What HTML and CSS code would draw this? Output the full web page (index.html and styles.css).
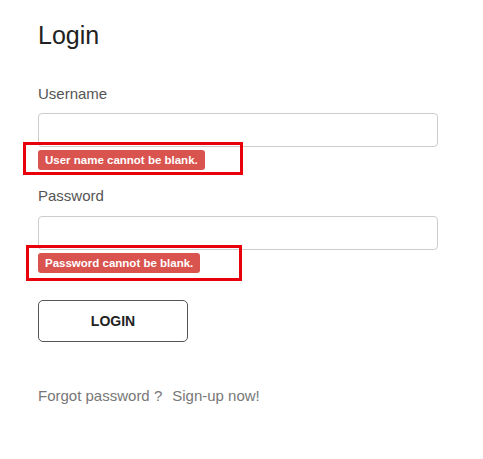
FILE: index.html
```html
<!DOCTYPE html>
<html>
<head>
<meta charset="utf-8">
<link rel="stylesheet" href="styles.css">
</head>
<body>
<div class="page">
  <h1 class="title">Login</h1>
  <div class="field field-user">
    <label class="label">Username</label>
    <input class="input" type="text">
    <span class="badge">User name cannot be blank.</span>
  </div>
  <div class="field field-pass">
    <label class="label">Password</label>
    <input class="input" type="password">
    <span class="badge">Password cannot be blank.</span>
  </div>
  <button class="btn">LOGIN</button>
  <div class="links">
    <a class="link">Forgot password ?</a>
    <a class="link">Sign-up now!</a>
  </div>
  <div class="mark mark-1"></div>
  <div class="mark mark-2"></div>
</div>
</body>
</html>
```
FILE: styles.css
```css
html, body {
  margin: 0;
  padding: 0;
  background: #fff;
}
.page {
  position: relative;
  width: 483px;
  height: 459px;
  padding: 21px 0 0 38px;
  box-sizing: border-box;
  font-family: "Liberation Sans", Arial, sans-serif;
}
.title {
  margin: 0;
  font-size: 25px;
  font-weight: normal;
  line-height: 29px;
  color: #222;
}
.field {
  display: flex;
  flex-direction: column;
  align-items: flex-start;
  width: 400px;
}
.field-user {
  margin-top: 34px;
}
.field-pass {
  margin-top: 16px;
}
.label {
  font-size: 15px;
  line-height: 20px;
  color: #555;
}
.field-user .input {
  margin-top: 9px;
}
.field-pass .input {
  margin-top: 10px;
}
.input {
  width: 400px;
  height: 34px;
  box-sizing: border-box;
  border: 1px solid #ccc;
  border-radius: 4px;
  padding: 6px 12px;
  font-size: 14px;
  outline: none;
}
.badge {
  margin-top: 3px;
  height: 20px;
  line-height: 20px;
  padding: 0 7px;
  background: #d9534f;
  color: #fff;
  font-weight: bold;
  font-size: 11.5px;
  border-radius: 3px;
  box-sizing: border-box;
}
.btn {
  display: block;
  margin-top: 27px;
  width: 150px;
  height: 42px;
  border: 1px solid #555;
  border-radius: 5px;
  background: #fff;
  font-family: "Liberation Sans", Arial, sans-serif;
  font-weight: bold;
  font-size: 14px;
  color: #222;
}
.links {
  display: flex;
  gap: 10px;
  margin-top: 44px;
  font-size: 15px;
  line-height: 20px;
  color: #777;
}
.mark {
  position: absolute;
  border: 3px solid #e8000b;
  box-sizing: border-box;
}
.mark-1 {
  left: 23px;
  top: 142px;
  width: 220px;
  height: 33px;
}
.mark-2 {
  left: 26px;
  top: 245px;
  width: 216px;
  height: 36px;
}
```
